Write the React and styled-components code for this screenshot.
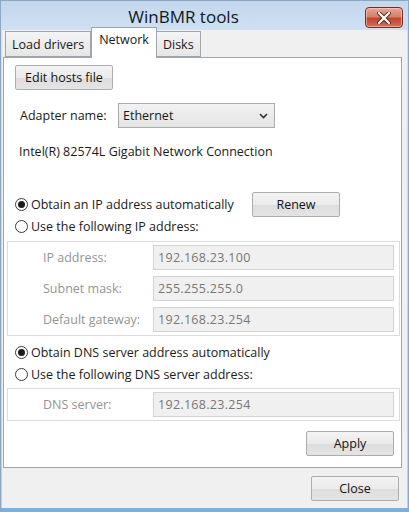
import React from "react";
import styled, { createGlobalStyle } from "styled-components";

const GlobalStyle = createGlobalStyle`
  html, body {
    margin: 0;
    padding: 0;
    background: #ffffff;
  }
  body {
    font-family: "Open Sans", "Liberation Sans", sans-serif;
    font-size: 12px;
    color: #1a1a1a;
  }
`;

const Window = styled.div`
  width: 409px;
  height: 512px;
  box-sizing: border-box;
  display: flex;
  flex-direction: column;
  background: linear-gradient(180deg, #c3d7ec 0%, #cfe0f2 30px, #b9d2ea 100%);
  border: 1px solid #8aa8c6;
  border-bottom: 4px solid #7db1dd;
  padding: 0 1px 0 1px;
`;

const TitleBar = styled.div`
  height: 29px;
  display: grid;
  grid-template-columns: 1fr auto 1fr;
  align-items: center;
`;

const Title = styled.div`
  grid-column: 2;
  font-size: 17px;
  color: #101820;
  padding-top: 2px;
  margin-right: 42px;
`;

const CloseX = styled.div`
  grid-column: 3;
  justify-self: end;
  margin-right: 4px;
  margin-top: 4px;
  width: 38px;
  height: 21px;
  box-sizing: border-box;
  border: 1px solid #7a2b22;
  border-radius: 4px;
  background: linear-gradient(180deg, #e9a796 0%, #d7806b 45%, #c0452c 55%, #d2705a 100%);
  display: flex;
  align-items: center;
  justify-content: center;
  box-shadow: inset 0 0 0 1px rgba(255, 220, 210, 0.5);
`;

const Client = styled.div`
  flex: 1;
  display: flex;
  flex-direction: column;
  background: #f0f0f0;
  padding: 0 5px 0 1px;
`;

const TabRow = styled.div`
  display: flex;
  align-items: flex-end;
  height: 27px;
  padding-left: 2px;
`;

const Tab = styled.div`
  box-sizing: border-box;
  height: ${(p) => (p.$active ? "31px" : "26px")};
  margin-bottom: ${(p) => (p.$active ? "-1px" : "0")};
  padding: ${(p) => (p.$active ? "3px 7px 0" : "4px 6px 0")};
  border: 1px solid #a0a4ab;
  border-bottom: ${(p) => (p.$active ? "none" : "1px solid #a0a4ab")};
  margin-left: ${(p) => (p.$active ? "0" : "-1px")};
  background: ${(p) =>
    p.$active ? "#ffffff" : "linear-gradient(180deg, #f4f4f4, #e6e6e6)"};
  font-size: 12.5px;
  position: relative;
  z-index: ${(p) => (p.$active ? 2 : 1)};
  &:first-child {
    margin-left: 0;
  }
`;

const Panel = styled.div`
  height: 411px;
  box-sizing: border-box;
  background: #ffffff;
  border: 1px solid #a0a4ab;
  position: relative;
  z-index: 1;
  padding: 7px 1px 0 5px;
  display: flex;
  flex-direction: column;
`;

const Button = styled.button`
  width: ${(p) => p.$w || 88}px;
  height: 25px;
  box-sizing: border-box;
  border: 1px solid #adadad;
  border-radius: 2px;
  background: linear-gradient(180deg, #f3f3f3 0%, #ebebeb 50%, #dddddd 51%, #e4e4e4 100%);
  font-family: "Open Sans", "Liberation Sans", sans-serif;
  font-size: 12.5px;
  color: #141414;
  padding: 0;
`;

const Row = styled.div`
  display: flex;
  align-items: center;
  justify-content: ${(p) => (p.$end ? "flex-end" : "flex-start")};
  margin-top: ${(p) => p.$top || 0}px;
  padding-left: ${(p) => p.$left || 0}px;
  padding-right: ${(p) => p.$right || 0}px;
`;

const Label = styled.span`
  flex: none;
  width: ${(p) => p.$w || "auto"};
  font-size: 12.5px;
  color: ${(p) => (p.$dim ? "#949494" : "#1a1a1a")};
`;

const Select = styled.div`
  width: 157px;
  height: 25px;
  box-sizing: border-box;
  border: 1px solid #acacac;
  background: linear-gradient(180deg, #f2f2f2, #e3e3e3);
  display: flex;
  align-items: center;
  justify-content: space-between;
  padding: 0 6px 0 4px;
  font-size: 12.5px;
`;

const InfoText = styled.div`
  padding-left: 10px;
  margin-top: 15px;
  font-size: 12.5px;
`;

const RadioRow = styled.label`
  display: flex;
  align-items: center;
  gap: 3px;
  height: 22px;
  width: ${(p) => p.$w || "auto"};
  font-size: 12.5px;
`;

const RadioCircle = styled.span`
  width: 13px;
  height: 13px;
  box-sizing: border-box;
  border-radius: 50%;
  border: 1px solid #3c3c3c;
  background: #ffffff;
  display: flex;
  align-items: center;
  justify-content: center;
  &::after {
    content: "";
    display: ${(p) => (p.$on ? "block" : "none")};
    width: 7px;
    height: 7px;
    border-radius: 50%;
    background: #1b1b1b;
  }
`;

const Group = styled.div`
  margin: ${(p) => p.$top || 4}px 0 0 -2px;
  border: 1px solid #dcdcdc;
  padding: 3px 5px 3px 35px;
  display: flex;
  flex-direction: column;
  gap: 6px;
`;

const Field = styled.div`
  display: flex;
  align-items: center;
  font-size: 12.5px;
`;

const Input = styled.div`
  flex: 1;
  height: 25px;
  box-sizing: border-box;
  border: 1px solid #d3d3d3;
  background: #f0f0f0;
  color: #777777;
  display: flex;
  align-items: center;
  padding-left: 4px;
  letter-spacing: 0.3px;
`;

const Footer = styled.div`
  flex: 1;
  display: flex;
  justify-content: flex-end;
  align-items: center;
  padding-right: 3px;
`;

const CloseGlyph = () => (
  <svg width="14" height="12" viewBox="0 0 14 12">
    <path
      d="M2 1 L12 11 M12 1 L2 11"
      stroke="#5a1a10"
      strokeWidth="4"
      strokeLinecap="round"
    />
    <path
      d="M2 1 L12 11 M12 1 L2 11"
      stroke="#ffffff"
      strokeWidth="2.4"
      strokeLinecap="round"
    />
  </svg>
);

const Chevron = () => (
  <svg width="9" height="6" viewBox="0 0 9 6">
    <path d="M1 1 L4.5 4.5 L8 1" fill="none" stroke="#333" strokeWidth="1.6" />
  </svg>
);

export default function App() {
  return (
    <>
      <GlobalStyle />
      <Window>
        <TitleBar>
          <Title>WinBMR tools</Title>
          <CloseX>
            <CloseGlyph />
          </CloseX>
        </TitleBar>
        <Client>
          <TabRow>
            <Tab>Load drivers</Tab>
            <Tab $active>Network</Tab>
            <Tab>Disks</Tab>
          </TabRow>
          <Panel>
            <Row $left={6}>
              <Button $w={98}>Edit hosts file</Button>
            </Row>
            <Row $top={13} $left={11}>
              <Label $w="98px">Adapter name:</Label>
              <Select>
                Ethernet
                <Chevron />
              </Select>
            </Row>
            <InfoText>Intel(R) 82574L Gigabit Network Connection</InfoText>

            <Row $top={32} $left={6}>
              <RadioRow $w="237px">
                <RadioCircle $on />
                Obtain an IP address automatically
              </RadioRow>
              <Button $w={88}>Renew</Button>
            </Row>
            <Row $left={6} $top={-2}>
              <RadioRow>
                <RadioCircle />
                Use the following IP address:
              </RadioRow>
            </Row>
            <Group $top={4}>
              <Field>
                <Label $dim $w="110px">IP address:</Label>
                <Input>192.168.23.100</Input>
              </Field>
              <Field>
                <Label $dim $w="110px">Subnet mask:</Label>
                <Input>255.255.255.0</Input>
              </Field>
              <Field>
                <Label $dim $w="110px">Default gateway:</Label>
                <Input>192.168.23.254</Input>
              </Field>
            </Group>
            <Row $left={6} $top={5}>
              <RadioRow>
                <RadioCircle $on />
                Obtain DNS server address automatically
              </RadioRow>
            </Row>
            <Row $left={6}>
              <RadioRow>
                <RadioCircle />
                Use the following DNS server address:
              </RadioRow>
            </Row>
            <Group $top={3}>
              <Field>
                <Label $dim $w="110px">DNS server:</Label>
                <Input>192.168.23.254</Input>
              </Field>
            </Group>
            <Row $top={10} $end $right={6}>
              <Button $w={88}>Apply</Button>
            </Row>
          </Panel>
          <Footer>
            <Button $w={88}>Close</Button>
          </Footer>
        </Client>
      </Window>
    </>
  );
}
